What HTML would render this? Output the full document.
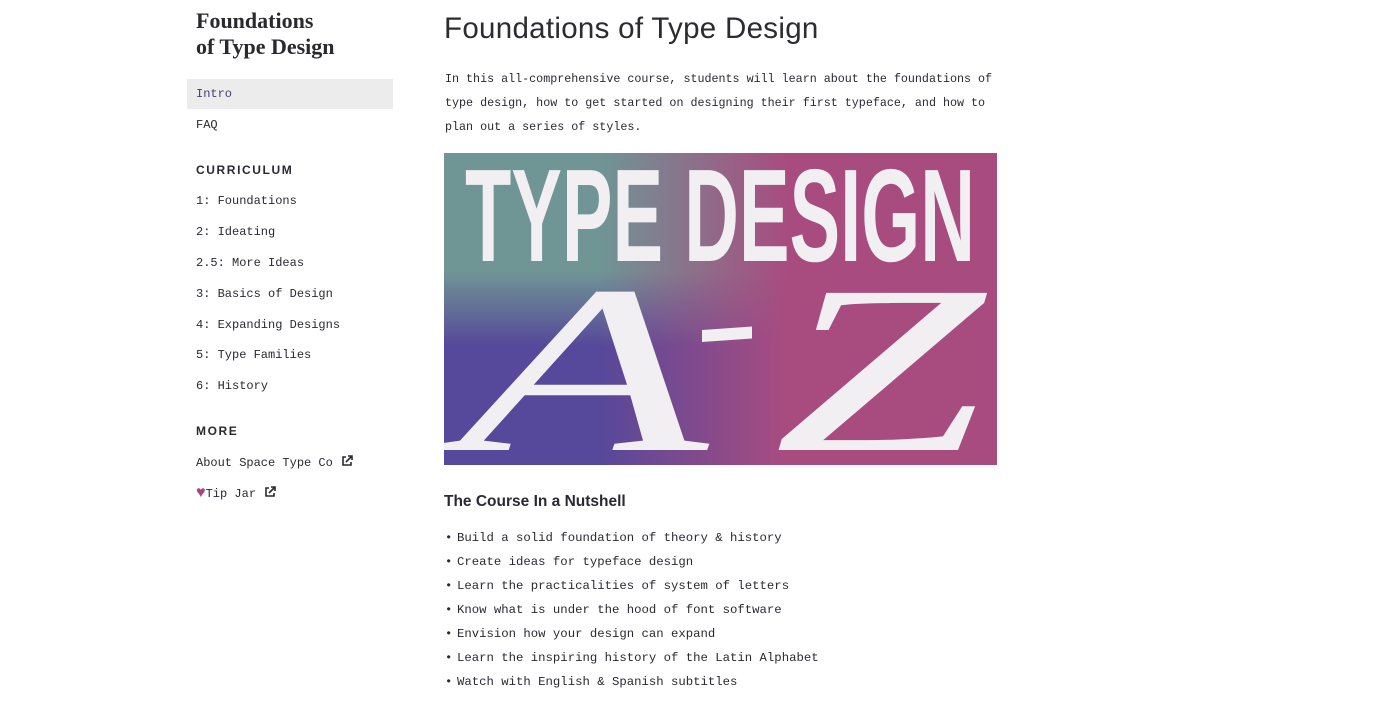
<!DOCTYPE html>
<html><head><meta charset="utf-8"><style>
body{margin:0;width:1400px;height:718px;background:#fff;color:#2b2833;font-family:"Liberation Mono",monospace;position:relative;overflow:hidden}
.a{position:absolute;white-space:nowrap}
.side{font-size:12px}
.brand{font-family:"Liberation Serif",serif;font-weight:bold;font-size:22px;line-height:26px;left:196px;top:8px;color:#2a2a2e}
.sec{font-family:"Liberation Sans",sans-serif;font-weight:bold;font-size:12px;letter-spacing:1.6px}
h1{position:absolute;left:444px;top:12px;margin:0;font-family:"Liberation Sans",sans-serif;font-weight:normal;font-size:29.5px;color:#2b2b30;letter-spacing:0.3px}
p.i{position:absolute;left:445px;top:67px;margin:0;font-size:11.7px;line-height:24px;width:560px}
ul{position:absolute;left:445px;top:526px;margin:0;padding:0;list-style:none;font-size:12.3px;line-height:24px}
ul li{height:24px}
ul li:before{content:"•";display:inline-block;width:12px}
.ext{display:inline-block;vertical-align:-1px;margin-left:8px}
</style></head><body>
<div class="a brand">Foundations<br>of Type Design</div>
<div class="a" style="left:187px;top:79px;width:206px;height:30px;background:#ececec"></div>
<div class="a side" style="left:196px;top:87px;color:#4a3b7a">Intro</div>
<div class="a side" style="left:196px;top:118px">FAQ</div>
<div class="a sec" style="left:196px;top:163px">CURRICULUM</div>
<div class="a side" style="left:196px;top:194px">1: Foundations</div>
<div class="a side" style="left:196px;top:225px">2: Ideating</div>
<div class="a side" style="left:196px;top:256px">2.5: More Ideas</div>
<div class="a side" style="left:196px;top:287px">3: Basics of Design</div>
<div class="a side" style="left:196px;top:318px">4: Expanding Designs</div>
<div class="a side" style="left:196px;top:348px">5: Type Families</div>
<div class="a side" style="left:196px;top:379px">6: History</div>
<div class="a sec" style="left:196px;top:424px">MORE</div>
<div class="a side" style="left:196px;top:455px">About Space Type Co<svg class="ext" width="12" height="12" viewBox="0 0 12 12" fill="none" stroke="#2b2833" stroke-width="1.6"><path d="M5 2H2v8h8V7M7 1h4v4M11 1L5 7"/></svg></div>
<div class="a side" style="left:196px;top:486px"><span style="color:#a4457e;font-size:16px;line-height:12px">♥</span>Tip Jar<svg class="ext" width="12" height="12" viewBox="0 0 12 12" fill="none" stroke="#2b2833" stroke-width="1.6"><path d="M5 2H2v8h8V7M7 1h4v4M11 1L5 7"/></svg></div>

<h1>Foundations of Type Design</h1>
<p class="i">In this all-comprehensive course, students will learn about the foundations of type design, how to get started on designing their first typeface, and how to plan out a series of styles.</p>

<div class="a" style="left:444px;top:153px;width:553px;height:312px;overflow:hidden;background:linear-gradient(90deg,rgba(168,76,128,0) 0%,rgba(168,76,128,0) 28%,#a84c80 62%,#a84c80 100%),linear-gradient(180deg,#6f9595 0%,#6f9595 38%,#56489a 62%,#56489a 100%)">
<svg width="553" height="312" style="position:absolute;left:0;top:0">
<text x="276" y="108" text-anchor="middle" font-family="Liberation Sans,sans-serif" font-weight="bold" font-size="132" fill="#f1eff2" textLength="510" lengthAdjust="spacingAndGlyphs">TYPE DESIGN</text>
<text x="14" y="297" font-family="Liberation Serif,serif" font-style="italic" font-size="240" fill="#f1eff2" textLength="250" lengthAdjust="spacingAndGlyphs">A</text>
<rect x="258" y="195" width="50" height="12" fill="#f1eff2" transform="skewY(-4)"/>
<text x="330" y="297" font-family="Liberation Serif,serif" font-style="italic" font-size="240" fill="#f1eff2" textLength="210" lengthAdjust="spacingAndGlyphs">Z</text>
</svg>
</div>

<div class="a" style="left:444px;top:493px;font-family:'Liberation Sans',sans-serif;font-weight:bold;font-size:15.5px">The Course In a Nutshell</div>
<ul>
<li>Build a solid foundation of theory &amp; history</li>
<li>Create ideas for typeface design</li>
<li>Learn the practicalities of system of letters</li>
<li>Know what is under the hood of font software</li>
<li>Envision how your design can expand</li>
<li>Learn the inspiring history of the Latin Alphabet</li>
<li>Watch with English &amp; Spanish subtitles</li>
</ul>
</body></html>
